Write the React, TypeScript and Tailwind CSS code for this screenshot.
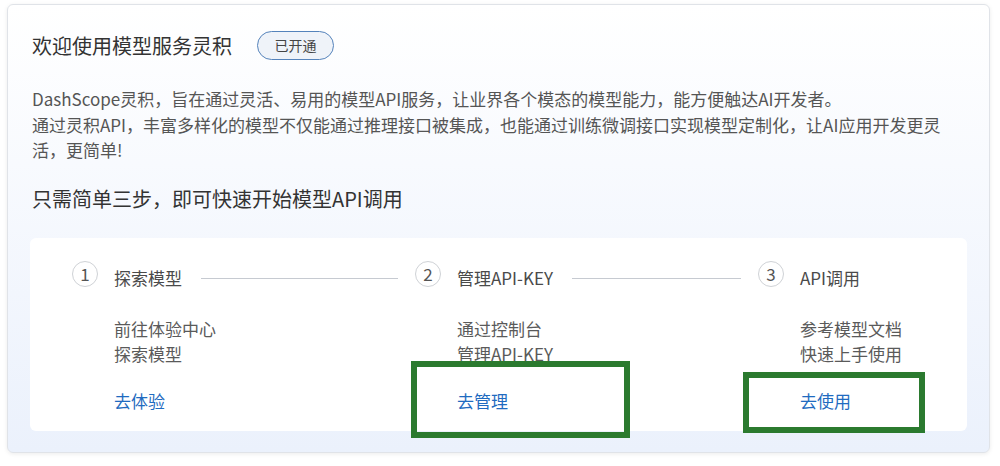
import React from "react";

type Step = {
  no: number;
  title: string;
  lines: string[];
  link: string;
};

const steps: Step[] = [
  { no: 1, title: "探索模型", lines: ["前往体验中心", "探索模型"], link: "去体验" },
  { no: 2, title: "管理API-KEY", lines: ["通过控制台", "管理API-KEY"], link: "去管理" },
  { no: 3, title: "API调用", lines: ["参考模型文档", "快速上手使用"], link: "去使用" },
];

function StepItem({ step, last }: { step: Step; last: boolean }) {
  return (
    <div className={last ? "flex w-[170px] shrink-0 flex-col" : "flex min-w-0 flex-1 flex-col"}>
      <div className="flex items-start">
        <div className="flex h-[26px] w-[26px] shrink-0 items-center justify-center rounded-full border border-[#cfd2d6] text-[17px] leading-none text-[#555]">
          {step.no}
        </div>
        <p className="ml-[16px] mt-[4px] shrink-0 text-[17px] leading-[26px] text-[#4a4a4a]">
          {step.title}
        </p>
        {!last ? (
          <div className="ml-[19px] mr-[17px] mt-[17px] h-px flex-1 bg-[#c6cad1]" />
        ) : null}
      </div>
      <div className="ml-[42px] mt-[25px] flex flex-col text-[17px] leading-[25px] text-[#5a5a5a]">
        {step.lines.map((l) => (
          <p key={l}>{l}</p>
        ))}
      </div>
      <a className="ml-[42px] mt-[22px] text-[17px] leading-[25px] text-[#1f6bc0]" href="#">
        {step.link}
      </a>
    </div>
  );
}

export default function App() {
  return (
    <div className="relative min-h-[466px] bg-white pl-[7px] pt-[4px] font-['Noto_Sans_CJK_SC',sans-serif]">
      <div className="w-[983px] rounded-[6px] border border-[#e0e3e8] bg-linear-to-b from-[#ffffff] to-[#ebf1fc] px-[22px] pb-[21px] pt-[26px] shadow-[0_1px_4px_rgba(0,0,0,0.08)]">
        {/* header */}
        <div className="flex items-center px-[2px]">
          <h1 className="text-[20px] font-normal leading-[29px] text-[#333]">欢迎使用模型服务灵积</h1>
          <span className="ml-[25px] flex h-[29px] w-[77px] items-center justify-center rounded-full border border-[#5583bb] bg-[#eff3f9] text-[14px] text-[#444]">
            已开通
          </span>
        </div>

        <div className="mt-[26px] max-w-[918px] px-[2px] text-[17px] leading-[25.5px] text-[#555]">
          <p>DashScope灵积，旨在通过灵活、易用的模型API服务，让业界各个模态的模型能力，能方便触达AI开发者。</p>
          <p>通过灵积API，丰富多样化的模型不仅能通过推理接口被集成，也能通过训练微调接口实现模型定制化，让AI应用开发更灵活，更简单!</p>
        </div>

        <p className="mt-[22px] px-[2px] text-[20px] leading-[28px] text-[#333]">
          只需简单三步，即可快速开始模型API调用
        </p>

        {/* steps */}
        <div className="mt-[25px] flex rounded-[6px] bg-white pb-[18px] pl-[42px] pr-[39px] pt-[23px]">
          {steps.map((s, i) => (
            <StepItem key={s.no} step={s} last={i === steps.length - 1} />
          ))}
        </div>
      </div>

      {/* annotation boxes */}
      <div className="absolute left-[411px] top-[361px] h-[77px] w-[219px] border-[6px] border-[#2b7a2f]" />
      <div className="absolute left-[743px] top-[372px] h-[61px] w-[182px] border-[6px] border-[#2b7a2f]" />
    </div>
  );
}
